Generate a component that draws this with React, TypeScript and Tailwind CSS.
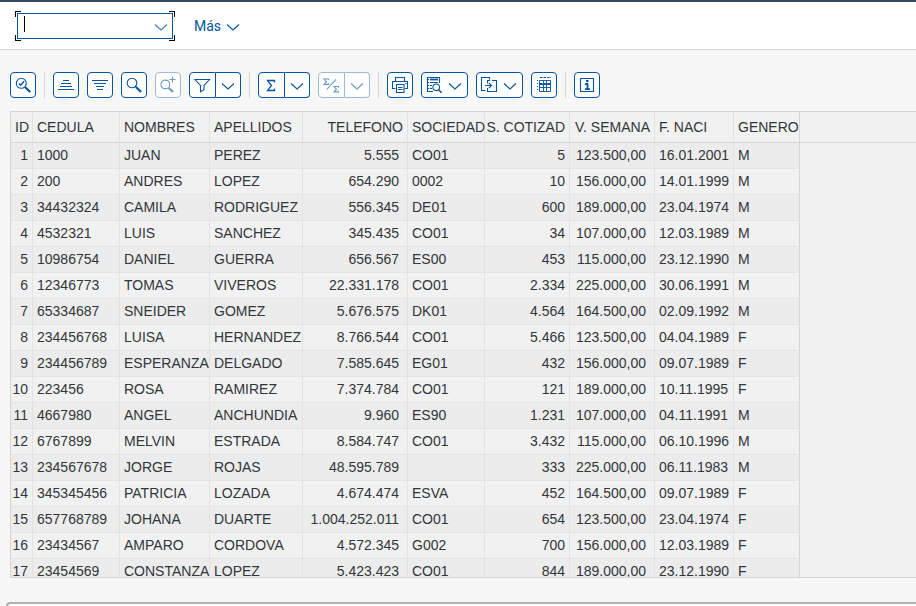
import type { ReactNode } from "react";

type Row = [string, string, string, string, string, string, string, string, string, string];

const rows: Row[] = [
  ["1", "1000", "JUAN", "PEREZ", "5.555", "CO01", "5", "123.500,00", "16.01.2001", "M"],
  ["2", "200", "ANDRES", "LOPEZ", "654.290", "0002", "10", "156.000,00", "14.01.1999", "M"],
  ["3", "34432324", "CAMILA", "RODRIGUEZ", "556.345", "DE01", "600", "189.000,00", "23.04.1974", "M"],
  ["4", "4532321", "LUIS", "SANCHEZ", "345.435", "CO01", "34", "107.000,00", "12.03.1989", "M"],
  ["5", "10986754", "DANIEL", "GUERRA", "656.567", "ES00", "453", "115.000,00", "23.12.1990", "M"],
  ["6", "12346773", "TOMAS", "VIVEROS", "22.331.178", "CO01", "2.334", "225.000,00", "30.06.1991", "M"],
  ["7", "65334687", "SNEIDER", "GOMEZ", "5.676.575", "DK01", "4.564", "164.500,00", "02.09.1992", "M"],
  ["8", "234456768", "LUISA", "HERNANDEZ", "8.766.544", "CO01", "5.466", "123.500,00", "04.04.1989", "F"],
  ["9", "234456789", "ESPERANZA", "DELGADO", "7.585.645", "EG01", "432", "156.000,00", "09.07.1989", "F"],
  ["10", "223456", "ROSA", "RAMIREZ", "7.374.784", "CO01", "121", "189.000,00", "10.11.1995", "F"],
  ["11", "4667980", "ANGEL", "ANCHUNDIA", "9.960", "ES90", "1.231", "107.000,00", "04.11.1991", "M"],
  ["12", "6767899", "MELVIN", "ESTRADA", "8.584.747", "CO01", "3.432", "115.000,00", "06.10.1996", "M"],
  ["13", "234567678", "JORGE", "ROJAS", "48.595.789", "", "333", "225.000,00", "06.11.1983", "M"],
  ["14", "345345456", "PATRICIA", "LOZADA", "4.674.474", "ESVA", "452", "164.500,00", "09.07.1989", "F"],
  ["15", "657768789", "JOHANA", "DUARTE", "1.004.252.011", "CO01", "654", "123.500,00", "23.04.1974", "F"],
  ["16", "23434567", "AMPARO", "CORDOVA", "4.572.345", "G002", "700", "156.000,00", "12.03.1989", "F"],
  ["17", "23454569", "CONSTANZA", "LOPEZ", "5.423.423", "CO01", "844", "189.000,00", "23.12.1990", "F"],
];

const columns = [
  { title: "ID", width: "w-[22px]", head: "pl-1 text-left", cell: "pr-1 text-right" },
  { title: "CEDULA", width: "w-[87px]", head: "pl-1 text-left", cell: "pl-1" },
  { title: "NOMBRES", width: "w-[90px]", head: "pl-1 text-left", cell: "pl-1" },
  { title: "APELLIDOS", width: "w-[93px]", head: "pl-1 text-left", cell: "pl-1" },
  { title: "TELEFONO", width: "w-[105px]", head: "pr-1 text-right", cell: "pr-2 text-right" },
  { title: "SOCIEDAD", width: "w-[77px]", head: "pl-1 text-left", cell: "pl-1" },
  { title: "S. COTIZAD", width: "w-[85px]", head: "pr-1 text-right", cell: "pr-1 text-right" },
  { title: "V. SEMANA", width: "w-[85px]", head: "pr-1 text-right", cell: "pr-2 text-right" },
  { title: "F. NACI", width: "w-[79px]", head: "pl-1 text-left", cell: "pl-1" },
  { title: "GENERO", width: "w-[66px]", head: "pl-1 text-left", cell: "pl-1" },
];

function Icon({ children }: { children: ReactNode }) {
  return (
    <svg
      viewBox="0 0 24 24"
      className="size-6 shrink-0"
      fill="none"
      stroke="currentColor"
      strokeWidth="1.1"
      aria-hidden="true"
    >
      {children}
    </svg>
  );
}

function Chevron() {
  return (
    <Icon>
      <path d="M6 10.5l6 5.5 6-5.5" />
    </Icon>
  );
}

function ToolButton({ label, disabled, children }: { label: string; disabled?: boolean; children: ReactNode }) {
  return (
    <button
      type="button"
      aria-label={label}
      disabled={disabled}
      className="flex h-[26px] items-center rounded border border-[#0854a0] bg-white text-[#0854a0] disabled:border-[#9cbbd9] disabled:text-[#6b98c6]"
    >
      {children}
    </button>
  );
}

function MenuToolButton({ label, children }: { label: string; children: ReactNode }) {
  return (
    <button
      type="button"
      aria-label={label}
      aria-haspopup="menu"
      className="flex h-[26px] items-center -space-x-[3px] rounded border border-[#0854a0] bg-white text-[#0854a0]"
    >
      {children}
      <Chevron />
    </button>
  );
}

function SplitButton({ label, disabled, children }: { label: string; disabled?: boolean; children: ReactNode }) {
  const side =
    "flex h-[26px] items-center border border-[#0854a0] bg-white text-[#0854a0] disabled:border-[#9cbbd9] disabled:text-[#6b98c6]";
  return (
    <div className="flex">
      <button type="button" aria-label={label} disabled={disabled} className={side + " w-[27px] rounded-l"}>
        {children}
      </button>
      <button
        type="button"
        aria-label={label + ": opciones"}
        disabled={disabled}
        className={side + " w-[25px] rounded-r border-l-0"}
      >
        <Chevron />
      </button>
    </div>
  );
}

function Separator() {
  return <div className="h-[26px] w-px bg-[#d5d5d5]" />;
}

function Toolbar() {
  return (
    <div className="flex gap-2 px-[10px] pt-[22px] pb-[13px]" role="toolbar" aria-label="Funciones de lista">
      <ToolButton label="Detalles">
        <Icon>
          <circle cx="10.3" cy="10.3" r="5" />
          <path d="M8 10.5l1.7 1.8L13 8.2" strokeWidth="1.4" />
          <path d="M14 14l5.2 5" strokeWidth="2.2" />
        </Icon>
      </ToolButton>
      <Separator />
      <ToolButton label="Orden ascendente">
        <Icon>
          <path d="M9 7.5h6M7 10.5h10M6 13.5h12M4 16.5h16" />
        </Icon>
      </ToolButton>
      <ToolButton label="Orden descendente">
        <Icon>
          <path d="M4 7.5h16M6 10.5h12M8 13.5h8M9 16.5h6" />
        </Icon>
      </ToolButton>
      <ToolButton label="Buscar">
        <Icon>
          <circle cx="10" cy="10" r="4.8" />
          <path d="M13.7 13.7l5.4 5.3" strokeWidth="2.2" />
        </Icon>
      </ToolButton>
      <ToolButton label="Continuar búsqueda" disabled>
        <Icon>
          <circle cx="9.3" cy="11.5" r="4.4" />
          <path d="M12.7 15l4.3 4" strokeWidth="2.2" />
          <path d="M16.5 3.5v6M13.5 6.5h6" />
        </Icon>
      </ToolButton>
      <SplitButton label="Filtrar">
        <Icon>
          <path d="M5 6.5h14.5L14 12.5v4.3l-3.5 2v-6.3z" />
        </Icon>
      </SplitButton>
      <Separator />
      <SplitButton label="Total">
        <Icon>
          <path d="M15.5 9.5v-2h-7l4 5-4 5h7v-2" strokeWidth="1.3" />
        </Icon>
      </SplitButton>
      <SplitButton label="Subtotal" disabled>
        <Icon>
          <path d="M9.5 7.2V6H5l2.5 2.7L5 11.4h4.5v-1.2" />
          <path d="M19.5 14.7v-1.2H15l2.5 2.7-2.5 2.7h4.5v-1.2" />
          <path d="M7.7 16.5L17 6.3" />
        </Icon>
      </SplitButton>
      <Separator />
      <ToolButton label="Imprimir">
        <Icon>
          <path d="M7.5 8.5v-4h9v4M7.5 15.5h-3v-7h15v7h-3" />
          <path d="M8.5 11.5h7.5v8H8.5zM10 14.5h4.5M10 16.5h4.5" />
          <path d="M17 10.5h1.5" />
        </Icon>
      </ToolButton>
      <MenuToolButton label="Vistas">
        <Icon>
          <path d="M17.5 10V4.5h-12v14h5.5" />
          <path d="M8 6.5h8" strokeWidth="1.8" />
          <path d="M8 9.5h8M8 12.5h2M8 15.5h2" />
          <path d="M6.5 6v12" strokeDasharray="1 2" />
          <circle cx="14.2" cy="14.3" r="3.3" />
          <path d="M16.6 16.8l3 3" strokeWidth="1.6" />
        </Icon>
      </MenuToolButton>
      <MenuToolButton label="Exportar">
        <Icon>
          <path d="M12.5 6.5v-2h-8v13h4" />
          <path d="M10.5 10.5v-3h2.7M15 7.5h4.5v11h-9v-3.5" />
          <path d="M8 12.5h6.5M11.8 9.8l2.8 2.7-2.8 2.7" />
        </Icon>
      </MenuToolButton>
      <ToolButton label="Disposición">
        <Icon>
          <path d="M8 4.5h11" strokeDasharray="2.5 1" strokeWidth="1" />
          <path d="M5.5 7v12" strokeDasharray="1 2" strokeWidth="1" />
          <path d="M7.5 7.5h11v11h-11zM7.5 11.5h11M7.5 14.5h11M11.5 7.5v11M14.5 7.5v11" strokeWidth="0.9" />
          <path d="M7 11.5l2-1 2 1 2-1 2 1 2-1 2 1" strokeWidth="1.4" />
        </Icon>
      </ToolButton>
      <Separator />
      <ToolButton label="Información">
        <Icon>
          <path d="M5.5 5.5h13v13h-13z" />
          <path d="M11 8h2.5" strokeWidth="2" />
          <path d="M10 11h2.5v5M10 16.2h5" strokeWidth="1.8" />
        </Icon>
      </ToolButton>
    </div>
  );
}

function CommandBar() {
  return (
    <header className="flex h-[50px] shrink-0 items-start border-t-2 border-b border-t-[#354a5f] border-b-[#d9d9d9] bg-white pt-[9px] pl-[15px]">
      <div className="relative w-40 p-0.5">
        <input
          type="text"
          aria-label="Comando"
          className="block h-[26px] w-full border border-[#0854a0] bg-white pr-6 pl-2 text-sm caret-transparent outline-none"
        />
        <span className="absolute top-[5px] left-[9px] h-4 w-px bg-black" />
        <button type="button" aria-label="Historial de comandos" className="absolute top-[3px] right-[2px] text-[#3f7cba]">
          <Chevron />
        </button>
        <span className="absolute top-0 left-0 size-1.5 border-t border-l border-black" />
        <span className="absolute top-0 right-0 size-1.5 border-t border-r border-black" />
        <span className="absolute bottom-0 left-0 size-1.5 border-b border-l border-black" />
        <span className="absolute right-0 bottom-0 size-1.5 border-r border-b border-black" />
      </div>
      <button
        type="button"
        className="ml-[19px] flex h-[30px] items-center font-['Roboto',sans-serif] text-sm text-[#0854a0]"
      >
        Más
        <Chevron />
      </button>
    </header>
  );
}

function DataGrid() {
  return (
    <div className="ml-[10px] min-h-0 flex-1 overflow-hidden border-t border-b border-l border-[#d5d5d5] bg-[#f1f1f1]">
      <table className="w-full table-fixed border-separate border-spacing-0 text-sm whitespace-nowrap text-[#32363a]">
        <colgroup>
          {columns.map((c) => (
            <col key={c.title} className={c.width} />
          ))}
          <col />
        </colgroup>
        <thead>
          <tr className="h-[31px]">
            {columns.map((c) => (
              <th
                key={c.title}
                scope="col"
                className={"border-r border-b border-r-[#e3e3e3] border-b-[#d5d5d5] p-0 font-normal nth-[10]:border-r-[#d5d5d5] " + c.head}
              >
                {c.title}
              </th>
            ))}
            <td className="border-b border-[#d5d5d5] p-0" />
          </tr>
        </thead>
        <tbody>
          {rows.map((row) => (
            <tr key={row[0]} className="h-[26px] odd:bg-[#ececec]">
              {row.map((value, i) => (
                <td
                  key={columns[i].title}
                  className={
                    "border-r border-b border-[#e3e3e3] p-0 pb-0.5 nth-[10]:border-r-[#d5d5d5] " + columns[i].cell
                  }
                >
                  {value}
                </td>
              ))}
              <td className="bg-[#f1f1f1] p-0" />
            </tr>
          ))}
        </tbody>
      </table>
    </div>
  );
}

export default function App() {
  return (
    <div className="flex h-screen flex-col overflow-hidden bg-[#f7f7f7] font-['Liberation_Sans',Arial,sans-serif]">
      <CommandBar />
      <Toolbar />
      <DataGrid />
      <footer className="mt-6 ml-[6px] h-1 shrink-0 rounded-tl border-t-2 border-l-2 border-[#b0b0b0] bg-white" />
    </div>
  );
}
